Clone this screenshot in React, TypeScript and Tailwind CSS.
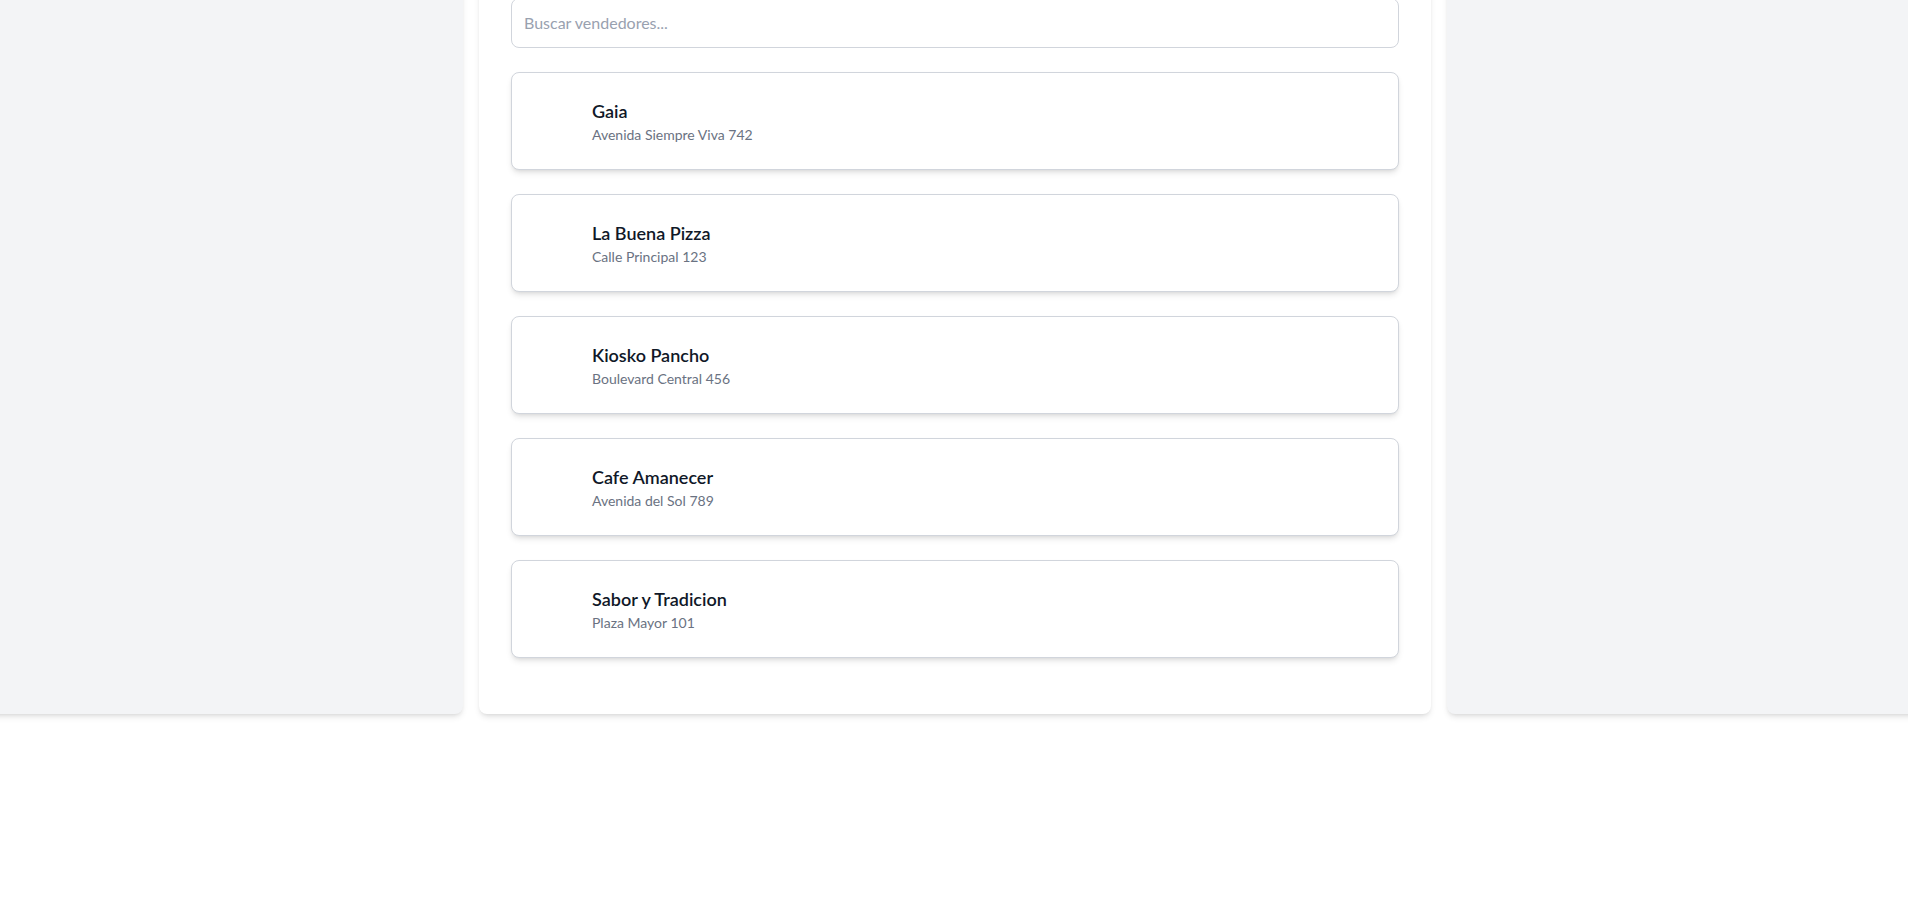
import { useState } from "react";

const vendedores = [
  { id: 1, nombre: "Gaia", direccion: "Avenida Siempre Viva 742" },
  { id: 2, nombre: "La Buena Pizza", direccion: "Calle Principal 123" },
  { id: 3, nombre: "Kiosko Pancho", direccion: "Boulevard Central 456" },
  { id: 4, nombre: "Cafe Amanecer", direccion: "Avenida del Sol 789" },
  { id: 5, nombre: "Sabor y Tradicion", direccion: "Plaza Mayor 101" },
];

const VendedorCard = ({ nombre, direccion }: { nombre: string; direccion: string }) => (
  <div className="flex items-center rounded-lg border border-gray-300 bg-white p-4 shadow-md">
    {/* imagen del local (sin cargar) */}
    <div className="h-16 w-16 shrink-0" />
    <div>
      <h3 className="text-lg font-semibold leading-7 text-gray-900">{nombre}</h3>
      <p className="text-sm leading-5 text-gray-500">{direccion}</p>
    </div>
  </div>
);

const App = () => {
  const [busqueda, setBusqueda] = useState("");

  const filtrados = vendedores.filter(v =>
    v.nombre.toLowerCase().includes(busqueda.toLowerCase())
  );

  return (
    <div
      className="min-h-screen overflow-hidden bg-white"
      style={{ fontFamily: "Lato, 'Noto Sans', sans-serif" }}
    >
      <div className="-mt-[34px] flex justify-center gap-4">
        {/* panel anterior */}
        <div className="w-[954px] shrink-0 rounded-lg bg-gray-100 shadow-md" />

        {/* panel actual */}
        <div className="w-[952px] shrink-0 rounded-lg bg-white px-8 pt-8 pb-8 shadow-md">
          <input
            type="text"
            value={busqueda}
            onChange={e => setBusqueda(e.target.value)}
            placeholder="Buscar vendedores..."
            className="mb-6 w-full rounded-lg border border-gray-300 px-3 py-3 text-base leading-6 text-gray-900 placeholder-gray-400 outline-none"
          />
          <div className="mb-6 flex flex-col gap-6">
            {filtrados.map(v => (
              <VendedorCard key={v.id} nombre={v.nombre} direccion={v.direccion} />
            ))}
          </div>
        </div>

        {/* panel siguiente */}
        <div className="w-[952px] shrink-0 rounded-lg bg-gray-100 shadow-md" />
      </div>
    </div>
  );
};

export default App;
